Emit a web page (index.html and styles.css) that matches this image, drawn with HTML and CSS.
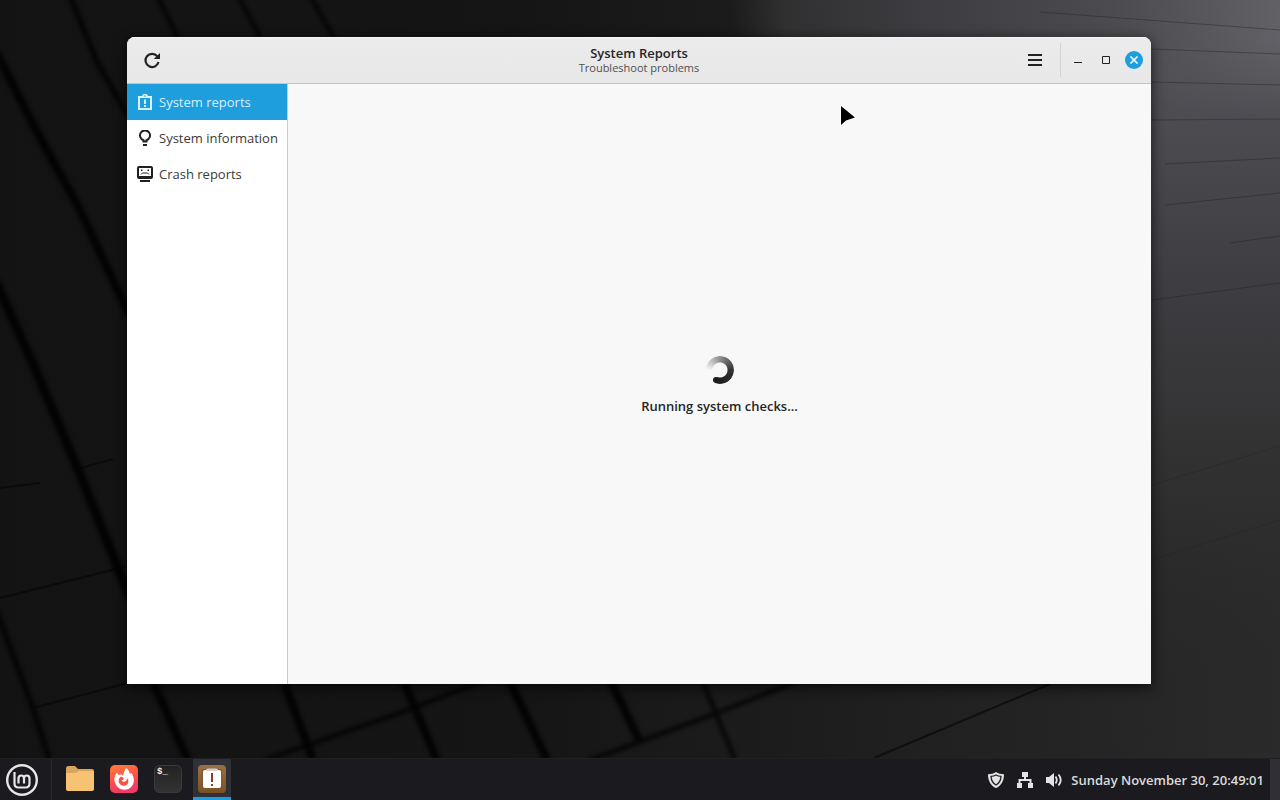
FILE: index.html
```html
<!DOCTYPE html>
<html lang="en">
<head>
<meta charset="utf-8">
<title>System Reports</title>
<link rel="stylesheet" href="styles.css">
</head>
<body>
<svg class="wallpaper" viewBox="0 0 1280 800" preserveAspectRatio="none" aria-hidden="true">
  <defs>
    <linearGradient id="base" x1="0" y1="0" x2="1" y2="0">
      <stop offset="0" stop-color="#131313"/><stop offset=".4" stop-color="#151515"/><stop offset=".66" stop-color="#1e1e1e"/><stop offset="1" stop-color="#2a2a2b"/>
    </linearGradient>
    <linearGradient id="sheen" x1="0" y1="0" x2="0" y2="1">
      <stop offset="0" stop-color="#58575c"/><stop offset=".2" stop-color="#49484d"/><stop offset=".38" stop-color="#3c3b3f"/><stop offset=".6" stop-color="#303030"/><stop offset=".85" stop-color="#2a2a2b" stop-opacity="0"/>
    </linearGradient>
    <linearGradient id="fade" gradientUnits="userSpaceOnUse" x1="730" y1="30" x2="1280" y2="0">
      <stop offset="0" stop-color="#303030" stop-opacity="0"/><stop offset=".1" stop-color="#303031"/><stop offset=".35" stop-color="#3d3c40"/><stop offset=".7" stop-color="#4c4b4f"/><stop offset="1" stop-color="#626166"/>
    </linearGradient>
    <linearGradient id="drop" x1="0" y1="0" x2="0" y2="1">
      <stop offset="0" stop-color="#fff"/><stop offset=".35" stop-color="#fff"/><stop offset="1" stop-color="#000"/>
    </linearGradient>
    <mask id="dropmask"><rect width="1280" height="120" fill="url(#drop)"/></mask>
    <filter id="soft" filterUnits="userSpaceOnUse" x="-20" y="-20" width="1320" height="840"><feGaussianBlur stdDeviation="2"/></filter>
  </defs>
  <rect width="1280" height="800" fill="url(#base)"/>
  <path d="M1140 0H1280V800H1140Z" fill="url(#sheen)"/>
  <path d="M700 0H1280V120H700Z" fill="url(#fade)" mask="url(#dropmask)"/>
  <g fill="none" stroke="#050505" filter="url(#soft)" opacity=".85">
    <path d="M70 -4L97 62L128 116" stroke-width="5"/>
    <path d="M-4 52L38 134L78 206L130 316" stroke-width="8"/>
    <path d="M-4 282L33 364L80 474L130 598" stroke-width="9"/>
    <path d="M-4 610L33 708L50 762" stroke-width="5"/>
    <path d="M157 -4L178 38M238 -4L261 38M310 -4L334 38" stroke-width="4"/>
    <path d="M153 682L188 760M284 682L313 760M404 682L437 760M510 682L547 760M611 682L640 742" stroke-width="8"/>
    <path d="M703 682L735 760M265 760L408 710L480 682M590 760L712 715L795 682" stroke-width="4"/>
  </g>
  <g fill="none" stroke="#050505" stroke-width="2" opacity=".6">
    <path d="M0 488L40 483M77 469L113 459M0 598L128 566M33 708L128 683M874 758L1050 684"/>
  </g>
  <g fill="none" stroke="#252429" stroke-width="1" opacity=".45">
    <path d="M1040 12L1280 30M1152 49L1280 54M1152 82L1280 85M1152 120L1280 119M1165 164L1280 158M1165 205L1280 193M1230 243L1280 236M1152 300L1280 283M1152 485L1280 446M1152 560L1280 520M1100 758L1172 722" />
  </g>
</svg>

<main class="desktop">
  <section class="window" aria-labelledby="win-title">
    <header class="titlebar">
      <button class="tool-btn" type="button" aria-label="Refresh">
        <svg width="18" height="18" viewBox="0 0 18 18"><path d="M15.500 11A6.600 6.600 0 1 1 14.200 5.200" fill="none" stroke="#222" stroke-width="2.200"/><path d="M17 2V8H10.800Z" fill="#222"/></svg>
      </button>
      <div class="titles">
        <h1 class="title" id="win-title">System Reports</h1>
        <p class="subtitle">Troubleshoot problems</p>
      </div>
      <div class="controls">
        <button class="menu-btn" type="button" aria-label="Menu">
          <svg width="14" height="12" viewBox="0 0 14 12"><path d="M0 1H14M0 6H14M0 11H14" stroke="#222" stroke-width="2"/></svg>
        </button>
        <span class="divider"></span>
        <button class="win-btn" type="button" aria-label="Minimize">
          <svg width="10" height="10" viewBox="0 0 10 10"><path d="M1 7.500H9" stroke="#222"/></svg>
        </button>
        <button class="win-btn" type="button" aria-label="Maximize">
          <svg width="10" height="10" viewBox="0 0 10 10"><path d="M1.500 1.500H8.500V8.500H1.500Z" fill="none" stroke="#222"/></svg>
        </button>
        <button class="win-btn" type="button" aria-label="Close">
          <svg width="18" height="18" viewBox="0 0 18 18"><circle cx="9" cy="9" r="9" fill="#1f9ede"/><path d="M5.500 5.500L12.500 12.500M12.500 5.500L5.500 12.500" stroke="#fff" stroke-width="1.600"/></svg>
        </button>
      </div>
    </header>
    <div class="body">
      <nav class="sidebar">
        <button class="nav-item active" type="button" aria-current="page">
          <svg width="16" height="16" viewBox="0 0 16 16"><path d="M2 3H14V15H2Z" fill="none" stroke="currentColor" stroke-width="2"/><path d="M5 2.500A3 2.700 0 0 1 11 2.500V4H5Z" fill="currentColor"/><circle cx="8" cy="2" r=".8" fill="#1f9ede"/><path d="M7 5.500H9V10H7ZM7 11H9V13H7Z" fill="currentColor"/></svg>
          <span>System reports</span>
        </button>
        <button class="nav-item" type="button">
          <svg width="16" height="16" viewBox="0 0 16 16"><path d="M6.500 11.500V10.200A5 5 0 1 1 9.500 10.200V11.500Z" fill="none" stroke="currentColor" stroke-width="2"/><path d="M6 14H10V16H6Z" fill="currentColor"/></svg>
          <span>System information</span>
        </button>
        <button class="nav-item" type="button">
          <svg width="16" height="16" viewBox="0 0 16 16"><rect x="1" y="1" width="14" height="11" rx="1" fill="none" stroke="currentColor" stroke-width="2"/><path d="M4 3.500H5.500V5H4ZM10.500 3.500H12V5H10.500Z" fill="currentColor"/><path d="M4 8.500L5.500 7H10.500L12 8.500" fill="none" stroke="currentColor"/><path d="M2 11H14M3 15H13" stroke="currentColor" stroke-width="2"/></svg>
          <span>Crash reports</span>
        </button>
      </nav>
      <div class="content" role="status">
        <span class="spinner"></span>
        <p class="status">Running system checks...</p>
      </div>
    </div>
  </section>
</main>

<footer class="taskbar">
  <button class="start" type="button" aria-label="Menu">
    <svg width="34" height="34" viewBox="0 0 34 34" fill="none" stroke="#e6e6e6"><circle cx="17" cy="17" r="14.800" stroke-width="2.400"/><path d="M9.500 9V20.500Q9.500 24.500 13.500 24.500H20.500Q24.500 24.500 24.500 20.500V15.500Q24.500 12.500 21.700 12.500Q19 12.500 19 15.500V20.500M19 15.500Q19 12.500 16.300 12.500Q13.500 12.500 13.500 15.500V20.500" stroke-width="2.200"/></svg>
  </button>
  <div class="apps">
    <button class="app" type="button" aria-label="Files">
      <svg width="30" height="30" viewBox="0 0 30 30"><path d="M1 4.500Q1 2 3.500 2H10L13 5H27Q29 5 29 7V12H1Z" fill="#d9a45b"/><path d="M1 9H11L14 7H29V25Q29 27 27 27H3Q1 27 1 25Z" fill="#f7c272"/></svg>
    </button>
    <button class="app" type="button" aria-label="Firefox">
      <svg width="30" height="30" viewBox="0 0 30 30"><defs><linearGradient id="fx" x1="0" y1="0" x2=".3" y2="1"><stop offset="0" stop-color="#ff8038"/><stop offset=".55" stop-color="#ff5148"/><stop offset="1" stop-color="#ee3b68"/></linearGradient></defs><rect x="1" y="1" width="28" height="28" rx="5" fill="url(#fx)"/><path d="M17 4C20 6 20.500 8 20.800 10L22.500 9C25 13 26 18 23 22C18.500 28 10 26.500 6.800 20.500C4.500 16 5.500 11.500 8 8.500L9.500 11C11 10 12.500 10.500 14 11.500C15 9 15.200 6.500 17 4Z" fill="#fff"/><path d="M12 12.500L15 14L14 16L12.500 16.500C14 18.700 18.300 17.800 18 14.200C20.400 16 19.900 21.500 15 21.800C10.500 22 8.300 17 10.500 14Z" fill="#fb5148"/></svg>
    </button>
    <button class="app" type="button" aria-label="Terminal">
      <svg width="30" height="30" viewBox="0 0 30 30"><defs><linearGradient id="tm" x1="0" y1="0" x2="0" y2="1"><stop offset="0" stop-color="#222"/><stop offset="1" stop-color="#333"/></linearGradient></defs><rect x="1.500" y="1.500" width="27" height="27" rx="5" fill="url(#tm)" stroke="#3c3c3c"/><text class="prompt" x="4" y="10">$_</text></svg>
    </button>
    <button class="app running" type="button" aria-label="System Reports">
      <svg width="30" height="30" viewBox="0 0 30 30"><defs><linearGradient id="rp" x1="0" y1="0" x2="0" y2="1"><stop offset="0" stop-color="#987043"/><stop offset="1" stop-color="#795223"/></linearGradient></defs><rect x="1" y="1" width="28" height="28" rx="4" fill="url(#rp)"/><rect x="5" y="5" width="20" height="20" rx="2" fill="#80572c"/><rect x="6" y="6" width="18" height="18" rx="2" fill="#fff"/><path d="M9 7V6Q9 4.500 11 4.500H19Q21 4.500 21 6V7Z" fill="#d4d0cb"/><path d="M14 9H16V18H14ZM14 20H16V22H14Z" fill="#8e3731"/></svg>
    </button>
  </div>
  <div class="tray">
    <button class="tray-btn" type="button" aria-label="Update Manager">
      <svg width="16" height="16" viewBox="0 0 16 16"><path d="M8 0C10.200 1.500 13 2.200 16 2.200C16 9 13 14 8 16C3 14 0 9 0 2.200C3 2.200 5.800 1.500 8 0Z" fill="#e4e4e4"/><path d="M8 3C9.600 3.900 11.300 4.300 13 4.400C12.700 8.700 11 11.500 8 13C5 11.500 3.300 8.700 3 4.400C4.700 4.300 6.400 3.900 8 3Z" fill="#e4e4e4" stroke="#222226" stroke-width="1.300"/></svg>
    </button>
    <button class="tray-btn" type="button" aria-label="Network">
      <svg width="16" height="16" viewBox="0 0 16 16"><path d="M5 0H11V5H5ZM0 11H5V16H0ZM11 11H16V16H11Z" fill="#e4e4e4"/><path d="M8 5V8M2.500 11V8H13.500V11" fill="none" stroke="#e4e4e4" stroke-width="2"/></svg>
    </button>
    <button class="tray-btn" type="button" aria-label="Volume">
      <svg width="16" height="16" viewBox="0 0 16 16"><path d="M0 5H3L8 1V15L3 11H0Z" fill="#e4e4e4"/><path d="M9.500 4.500Q12 8 9.500 11.500M12.500 2.500Q17 8 12.500 13.500" fill="none" stroke="#e4e4e4" stroke-width="1.800"/></svg>
    </button>
    <time class="clock" datetime="2025-11-30T20:49:01">Sunday November 30, 20:49:01</time>
  </div>
  <button class="corner" type="button" aria-label="Show desktop"></button>
</footer>

<svg class="cursor" width="18" height="24" viewBox="0 0 18 24" aria-hidden="true"><path d="M2 2V21L7 16.500L16 13.500Z" fill="#000" stroke="#fff" stroke-width="2" paint-order="stroke" stroke-linejoin="round"/></svg>
</body>
</html>
```
FILE: styles.css
```css
* { box-sizing: border-box; }

body {
  margin: 0;
  height: 100vh;
  display: flex;
  flex-direction: column;
  overflow: hidden;
  background: #151515;
  color: #303030;
  font-family: "Open Sans", "Noto Sans", sans-serif;
  font-size: 13px;
  line-height: 18px;
}

button {
  display: flex;
  align-items: center;
  justify-content: center;
  margin: 0;
  padding: 0;
  border: 0;
  background: none;
  color: inherit;
  font: inherit;
}

h1, p { margin: 0; }
svg { display: block; flex: none; }

.wallpaper {
  position: absolute;
  inset: 0;
  width: 100%;
  height: 100%;
  z-index: -1;
}

.desktop {
  flex: 1;
  min-height: 0;
  display: flex;
  padding: 37px 129px 74px 127px;
}

.window {
  flex: 1;
  display: flex;
  flex-direction: column;
  overflow: hidden;
  border-radius: 8px 8px 0 0;
  background: #f8f8f8;
  box-shadow: 0 3px 14px rgba(0, 0, 0, .7);
}

.titlebar {
  display: grid;
  grid-template-columns: 1fr auto 1fr;
  align-items: center;
  height: 47px;
  padding: 0 8px;
  border-bottom: 1px solid #c4c4c4;
  background: linear-gradient(#ebebeb, #e8e8e8);
  box-shadow: inset 0 1px #f6f6f6;
}

.tool-btn { width: 34px; height: 34px; }
.titles { text-align: center; }
.title { font-size: 13px; line-height: 16px; font-weight: 600; color: #262626; }
.subtitle { font-size: 11px; line-height: 14px; color: #505050; }

.controls {
  display: flex;
  align-items: center;
  justify-content: flex-end;
}
.menu-btn { width: 34px; height: 34px; }
.divider {
  width: 1px;
  height: 34px;
  margin: 0 3px 0 8px;
  background: #d4d4d4;
}
.win-btn { width: 28px; height: 28px; }
.win-btn:last-child { margin-right: -5px; }

.body {
  flex: 1;
  display: flex;
  min-height: 0;
}
.sidebar {
  flex: none;
  width: 161px;
  border-right: 1px solid #cbcbcb;
  background: #fff;
}
.nav-item {
  width: 100%;
  height: 36px;
  gap: 6px;
  padding: 0 10px;
  justify-content: flex-start;
  color: #3a3a3a;
  white-space: nowrap;
}
.nav-item svg { color: #202020; }
.nav-item.active { background: #1f9ede; color: #d8f0fc; }
.nav-item.active svg { color: #d8f3ff; }

.content {
  flex: 1;
  display: flex;
  flex-direction: column;
  align-items: center;
  justify-content: center;
  gap: 13px;
  padding-top: 3px;
}
.spinner {
  position: relative;
  width: 28px;
  height: 28px;
  border-radius: 50%;
  background: conic-gradient(from 270deg, transparent, #999 80deg, #333 180deg, #1c1c1c 290deg, transparent 291deg);
  -webkit-mask: radial-gradient(circle, transparent 7px, #000 8px);
  mask: radial-gradient(circle, transparent 7px, #000 8px);
}
.spinner::after {
  content: "";
  position: absolute;
  left: 7px;
  bottom: 1px;
  width: 6px;
  height: 6px;
  border-radius: 50%;
  background: #1c1c1c;
}
.status { font-weight: 600; color: #262626; }

.taskbar {
  flex: none;
  display: flex;
  align-items: stretch;
  height: 42px;
  background: #1b1b1f;
  border-top: 1px solid #202024;
  color: #dcdcdc;
}
.start { width: 52px; padding-right: 8px; border-right: 1px solid #29292d; }
.apps { display: flex; gap: 6px; margin-left: 9px; }
.app { width: 38px; padding-top: 2px; border-bottom: 3px solid transparent; }
.app.running { background: #303038; border-color: #1f9ede; }
.prompt { fill: #eee; font: 700 9px "Liberation Mono", monospace; }

.tray {
  display: flex;
  align-items: center;
  margin-left: auto;
  gap: 6px;
  padding-right: 6px;
}
.tray-btn { width: 23px; height: 30px; }
.clock { font-weight: 600; white-space: nowrap; }
.corner { width: 10px; background: #2f2f35; }

.cursor {
  position: absolute;
  left: 839px;
  top: 104px;
}
```
